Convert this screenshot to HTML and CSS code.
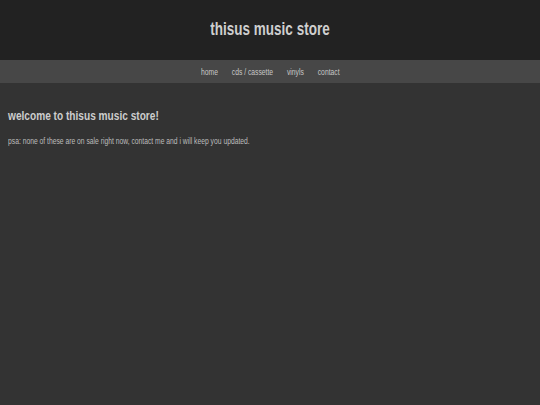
FILE: index.html
```html
<!DOCTYPE html>
<html lang="en">
<head>
<meta charset="utf-8">
<title>thisus music store</title>
<link rel="stylesheet" href="styles.css">
</head>
<body>
<header class="site-header">
  <h1 class="site-title">thisus music store</h1>
</header>
<nav class="site-nav">
  <div class="nav-links">
    <a class="nav-link" href="#">home</a>
    <a class="nav-link" href="#">cds / cassette</a>
    <a class="nav-link" href="#">vinyls</a>
    <a class="nav-link" href="#">contact</a>
  </div>
</nav>
<main class="content">
  <h2 class="welcome">welcome to thisus music store!</h2>
  <p class="notice">psa: none of these are on sale right now, contact me and i will keep you updated.</p>
</main>
</body>
</html>
```
FILE: styles.css
```css
html, body {
  margin: 0;
  padding: 0;
  background: #333333;
}

body {
  font-family: "Liberation Sans", Arial, sans-serif;
  color: #c4c4c4;
  min-height: 405px;
}

/* the type in this design is horizontally condensed */
.condensed,
.site-title,
.nav-links,
.welcome,
.notice {
  transform: scaleX(0.75);
}

.site-header {
  background: #222222;
  height: 60px;
  box-sizing: border-box;
  padding-top: 19px;
  text-align: center;
}

.site-title {
  margin: 0;
  font-size: 18px;
  line-height: 21px;
  font-weight: bold;
  color: #cfcfcf;
  transform-origin: center;
}

.site-nav {
  background: #474747;
  height: 23px;
  display: flex;
  justify-content: center;
  align-items: center;
}

.nav-links {
  display: flex;
  gap: 18.5px;
  transform-origin: center;
}

.nav-link {
  font-size: 9px;
  color: #c8c8c8;
  text-decoration: none;
}

.content {
  padding: 25px 8px 0;
}

.welcome {
  margin: 0;
  font-size: 13.5px;
  font-weight: bold;
  color: #cdcdcd;
  transform-origin: left center;
}

.notice {
  margin: 13px 0 0;
  font-size: 9px;
  color: #bdbdbd;
  transform-origin: left center;
}
```
